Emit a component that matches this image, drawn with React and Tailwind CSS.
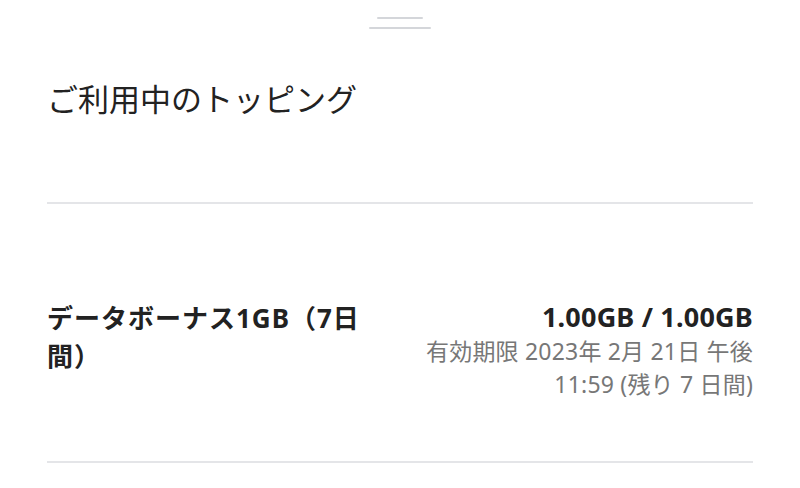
const App = () => {
  return (
    <div
      className="w-[800px] h-[488px] bg-white overflow-hidden"
      style={{ fontFamily: '"Noto Sans", "Noto Sans CJK JP", sans-serif' }}
    >
      <div className="flex flex-col items-center pt-[17px]">
        <div className="w-[46px] h-[2px] bg-[#d4d6da] rounded-full" />
        <div className="w-[62px] h-[2px] bg-[#d4d6da] rounded-full mt-[8px]" />
      </div>
      <div className="px-[47px]">
        <h1 className="text-[31px] leading-[40px] text-[#222] mt-[50px]">
          ご利用中のトッピング
        </h1>
        <div className="h-[2px] bg-[#e4e5e8] mt-[83px]" />
        <div className="flex justify-between items-start mt-[95px]">
          <div className="w-[330px] text-[26px] leading-[38px] font-bold text-[#222] tracking-[1px]">
            データボーナス1GB（7日間）
          </div>
          <div className="w-[345px] text-right">
            <div className="text-[27px] leading-[36px] font-bold text-[#222] tracking-[0.2px]">
              1.00GB / 1.00GB
            </div>
            <div className="text-[23px] leading-[33px] text-[#777] tracking-[0.2px]">
              有効期限 2023年 2月 21日 午後 11:59 (残り 7 日間)
            </div>
          </div>
        </div>
        <div className="h-[2px] bg-[#e4e5e8] mt-[60px]" />
      </div>
    </div>
  );
};

export default App;
